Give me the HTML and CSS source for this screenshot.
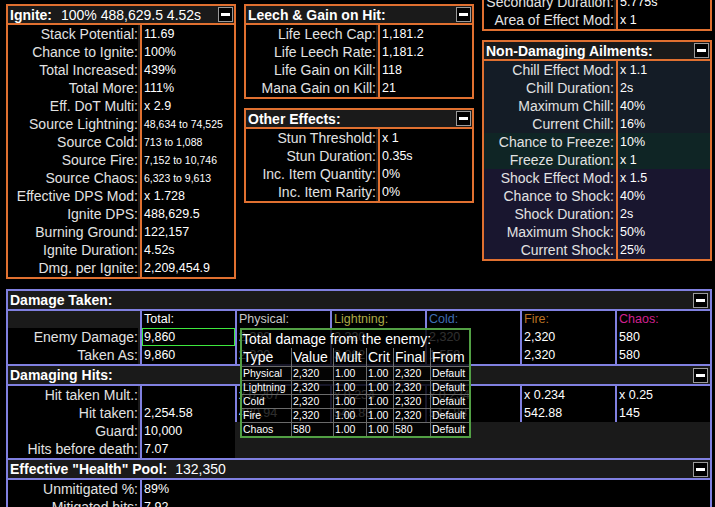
FILE: index.html
```html
<!DOCTYPE html>
<html>
<head>
<meta charset="utf-8">
<title>Calcs</title>
<link rel="stylesheet" href="styles.css">
</head>
<body>
<div class="page">
  <div class="cols">
    <div class="col">
      <section class="panel off">
        <div class="head"><span class="ttl">Ignite:</span><span class="hv">100% 488,629.5 4.52s</span><span class="tog"></span></div>
        <div class="row"><div class="lbl">Stack Potential:</div><div class="val">11.69</div></div>
        <div class="row"><div class="lbl">Chance to Ignite:</div><div class="val">100%</div></div>
        <div class="row"><div class="lbl">Total Increased:</div><div class="val">439%</div></div>
        <div class="row"><div class="lbl">Total More:</div><div class="val">111%</div></div>
        <div class="row"><div class="lbl">Eff. DoT Multi:</div><div class="val">x 2.9</div></div>
        <div class="row"><div class="lbl">Source Lightning:</div><div class="val sm">48,634 to 74,525</div></div>
        <div class="row"><div class="lbl">Source Cold:</div><div class="val sm">713 to 1,088</div></div>
        <div class="row"><div class="lbl">Source Fire:</div><div class="val sm">7,152 to 10,746</div></div>
        <div class="row"><div class="lbl">Source Chaos:</div><div class="val sm">6,323 to 9,613</div></div>
        <div class="row"><div class="lbl">Effective DPS Mod:</div><div class="val">x 1.728</div></div>
        <div class="row"><div class="lbl">Ignite DPS:</div><div class="val">488,629.5</div></div>
        <div class="row"><div class="lbl">Burning Ground:</div><div class="val">122,157</div></div>
        <div class="row"><div class="lbl">Ignite Duration:</div><div class="val">4.52s</div></div>
        <div class="row"><div class="lbl">Dmg. per Ignite:</div><div class="val">2,209,454.9</div></div>
      </section>
    </div>
    <div class="col">
      <section class="panel off">
        <div class="head"><span class="ttl">Leech &amp; Gain on Hit:</span><span class="tog"></span></div>
        <div class="row"><div class="lbl">Life Leech Cap:</div><div class="val">1,181.2</div></div>
        <div class="row"><div class="lbl">Life Leech Rate:</div><div class="val">1,181.2</div></div>
        <div class="row"><div class="lbl">Life Gain on Kill:</div><div class="val">118</div></div>
        <div class="row"><div class="lbl">Mana Gain on Kill:</div><div class="val">21</div></div>
      </section>
      <section class="panel off">
        <div class="head"><span class="ttl">Other Effects:</span><span class="tog"></span></div>
        <div class="row"><div class="lbl">Stun Threshold:</div><div class="val">x 1</div></div>
        <div class="row"><div class="lbl">Stun Duration:</div><div class="val">0.35s</div></div>
        <div class="row"><div class="lbl">Inc. Item Quantity:</div><div class="val">0%</div></div>
        <div class="row"><div class="lbl">Inc. Item Rarity:</div><div class="val">0%</div></div>
      </section>
    </div>
    <div class="col">
      <section class="panel off lift">
        <div class="head"><span class="ttl">Skill Durations:</span><span class="tog"></span></div>
        <div class="row"><div class="lbl">Secondary Duration:</div><div class="val">5.775s</div></div>
        <div class="row"><div class="lbl">Area of Effect Mod:</div><div class="val">x 1</div></div>
      </section>
      <section class="panel off">
        <div class="head"><span class="ttl">Non-Damaging Ailments:</span><span class="tog"></span></div>
        <div class="row chill"><div class="lbl">Chill Effect Mod:</div><div class="val">x 1.1</div></div>
        <div class="row chill"><div class="lbl">Chill Duration:</div><div class="val">2s</div></div>
        <div class="row chill"><div class="lbl">Maximum Chill:</div><div class="val">40%</div></div>
        <div class="row chill"><div class="lbl">Current Chill:</div><div class="val">16%</div></div>
        <div class="row freeze"><div class="lbl">Chance to Freeze:</div><div class="val">10%</div></div>
        <div class="row freeze"><div class="lbl">Freeze Duration:</div><div class="val">x 1</div></div>
        <div class="row shock"><div class="lbl">Shock Effect Mod:</div><div class="val">x 1.5</div></div>
        <div class="row shock"><div class="lbl">Chance to Shock:</div><div class="val">40%</div></div>
        <div class="row shock"><div class="lbl">Shock Duration:</div><div class="val">2s</div></div>
        <div class="row shock"><div class="lbl">Maximum Shock:</div><div class="val">50%</div></div>
        <div class="row shock"><div class="lbl">Current Shock:</div><div class="val">25%</div></div>
      </section>
    </div>
  </div>

  <section class="panel def dt">
    <div class="head"><span class="ttl">Damage Taken:</span><span class="tog"></span></div>
    <div class="row r17"><div class="lbl empty"></div><div class="c">Total:</div><div class="c phys">Physical:</div><div class="c light">Lightning:</div><div class="c cold">Cold:</div><div class="c fire">Fire:</div><div class="c chaos">Chaos:</div></div>
    <div class="row"><div class="lbl">Enemy Damage:</div><div class="c hl">9,860</div><div class="c">2,320</div><div class="c">2,320</div><div class="c">2,320</div><div class="c">2,320</div><div class="c">580</div></div>
    <div class="row"><div class="lbl">Taken As:</div><div class="c">9,860</div><div class="c">2,320</div><div class="c">3,082</div><div class="c">1,558</div><div class="c">2,320</div><div class="c">580</div></div>

    <div class="head sub"><span class="ttl">Damaging Hits:</span><span class="tog"></span></div>
    <div class="row"><div class="lbl">Hit taken Mult.:</div><div class="c"></div><div class="c">x 0.207</div><div class="c">x 0.234</div><div class="c">x 0.234</div><div class="c">x 0.234</div><div class="c">x 0.25</div></div>
    <div class="row"><div class="lbl">Hit taken:</div><div class="c">2,254.58</div><div class="c">480.94</div><div class="c">542.88</div><div class="c">542.88</div><div class="c">542.88</div><div class="c">145</div></div>
    <div class="row"><div class="lbl">Guard:</div><div class="c">10,000</div></div>
    <div class="row"><div class="lbl">Hits before death:</div><div class="c">7.07</div></div>

    <div class="head sub"><span class="ttl">Effective "Health" Pool:</span><span class="hv ehp">132,350</span><span class="tog"></span></div>
    <div class="ehpbody">
      <div class="row"><div class="lbl">Unmitigated %:</div><div class="val">89%</div></div>
      <div class="row"><div class="lbl">Mitigated hits:</div><div class="val">7.92</div></div>
    </div>
  </section>

  <div class="tip">
    <div class="tt">Total damage from the enemy:</div>
    <div class="tg">
      <div class="th">Type</div><div class="th">Value</div><div class="th">Mult</div><div class="th">Crit</div><div class="th">Final</div><div class="th">From</div>
      <div>Physical</div><div>2,320</div><div>1.00</div><div>1.00</div><div>2,320</div><div>Default</div>
      <div>Lightning</div><div>2,320</div><div>1.00</div><div>1.00</div><div>2,320</div><div>Default</div>
      <div>Cold</div><div>2,320</div><div>1.00</div><div>1.00</div><div>2,320</div><div>Default</div>
      <div>Fire</div><div>2,320</div><div>1.00</div><div>1.00</div><div>2,320</div><div>Default</div>
      <div>Chaos</div><div>580</div><div>1.00</div><div>1.00</div><div>580</div><div>Default</div>
    </div>
  </div>
</div>
</body>
</html>
```

FILE: styles.css
```css
* { box-sizing: border-box; }

html, body {
  margin: 0;
  padding: 0;
  background: #000;
}

body {
  width: 715px;
  height: 507px;
  overflow: hidden;
  font-family: "Liberation Sans", Arial, sans-serif;
  color: #fff;
}

.page {
  position: relative;
  padding: 4px 0 0 6px;
}

.cols {
  display: flex;
  gap: 8px;
  align-items: flex-start;
}

.col {
  width: 230px;
  display: flex;
  flex-direction: column;
  gap: 9px;
}

.panel {
  border: 2px solid var(--bc);
  background: #1a1a1a;
}

.off { --bc: #e07030; }
.def { --bc: #8080e0; }

.lift { margin-top: -32px; }

.head {
  height: 19px;
  display: flex;
  align-items: center;
  border-bottom: 2px solid var(--bc);
  padding-left: 2px;
  font-size: 14px;
  white-space: nowrap;
}

.ttl { font-weight: bold; }

.hv { margin-left: 9px; }
.hv.ehp { margin-left: 8px; }

.tog {
  margin-left: auto;
  margin-right: 1px;
  width: 15px;
  height: 15px;
  border: 1px solid #9a9a9a;
  background: #000;
  position: relative;
  flex: none;
}

.tog::after {
  content: "";
  position: absolute;
  left: 2px;
  right: 2px;
  top: 5px;
  height: 3px;
  background: #fff;
}

.row {
  display: flex;
  height: 18px;
  line-height: 18px;
}

.lbl {
  width: 130px;
  flex: none;
  margin-right: 2px;
  background: #000;
  text-align: right;
  font-size: 14px;
  color: #e2e2e2;
  white-space: nowrap;
}

.lbl.empty { background: transparent; }

.val {
  flex: 1;
  border-left: 2px solid var(--bc);
  background: #000;
  padding-left: 2px;
  font-size: 12.5px;
  white-space: nowrap;
}

.val.sm { font-size: 10.5px; }

.chill, .chill .lbl, .chill .val { background: #141c26; }
.freeze, .freeze .lbl, .freeze .val { background: #0f2525; }
.shock, .shock .lbl, .shock .val { background: #19162f; }

/* Damage taken block */
.dt {
  width: 706px;
  margin-top: 10px;
}

.dt .head { height: 20px; }
.dt .tog { margin-right: 2px; }

.dt .head.sub {
  height: 22px;
  border-top: 2px solid var(--bc);
}

.r17 {
  height: 17px;
  line-height: 17px;
}

.c {
  width: 95px;
  flex: none;
  border-left: 2px solid var(--bc);
  background: #000;
  padding-left: 2px;
  font-size: 12.5px;
  white-space: nowrap;
}

.c.phys { color: #c8c8c8; }
.c.light { color: #adaa47; }
.c.cold { color: #3f6db3; }
.c.fire { color: #b97123; }
.c.chaos { color: #d02090; }

.hl { position: relative; }
.hl::after {
  content: "";
  position: absolute;
  inset: 0;
  border: 1px solid #3ee83e;
}

.ehpbody { background: #000; }

/* Tooltip */
.tip {
  position: absolute;
  left: 240px;
  top: 328px;
  width: 231px;
  height: 110px;
  border: 2px solid #52a044;
  background: rgba(0, 0, 0, 0.82);
}

.tt {
  height: 18px;
  line-height: 18px;
  font-size: 14px;
  white-space: nowrap;
}

.tg {
  display: grid;
  grid-template-columns: 49px 42px 33px 27px 37px 39px;
}

.tg > div {
  height: 14px;
  line-height: 13px;
  font-size: 10.5px;
  padding-left: 1px;
  border-left: 1px solid #6b6b6b;
  border-top: 1px solid #6b6b6b;
  white-space: nowrap;
  overflow: hidden;
}

.tg > div:nth-child(6n+1) { border-left: 0; }

.tg > .th {
  height: 18px;
  line-height: 18px;
  font-size: 14px;
  border-top: 0;
}
```
